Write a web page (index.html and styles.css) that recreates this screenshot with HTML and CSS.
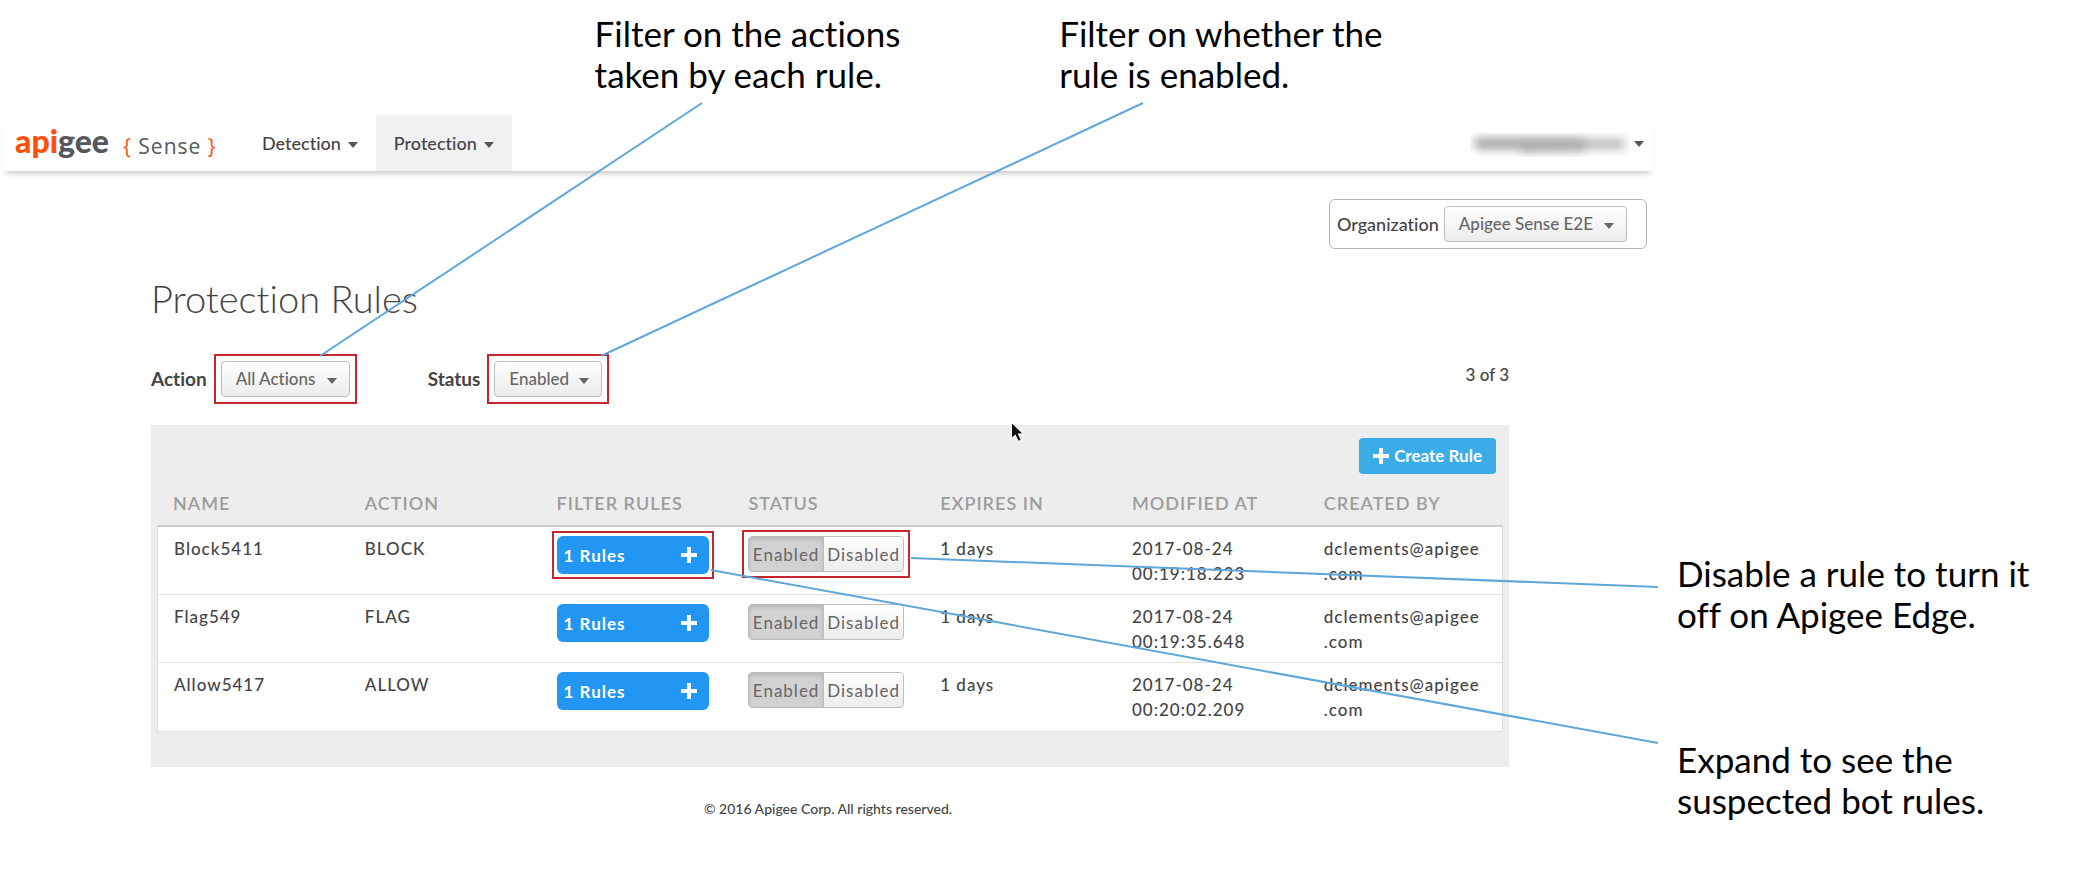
FILE: index.html
```html
<!DOCTYPE html>
<html lang="en">
<head>
<meta charset="utf-8">
<title>Apigee Sense – Protection Rules</title>
<link rel="stylesheet" href="styles.css">
</head>
<body>
<div class="figure">
  <div class="notes-top">
    <p class="note">Filter on the actions<br>taken by each rule.</p>
    <p class="note">Filter on whether the<br>rule is enabled.</p>
  </div>

  <div class="columns">
    <div class="app">
      <header class="topbar">
        <a class="brand" href="#"><span class="brand-name"><span class="orange">api</span>gee</span>
          <span class="product"><span class="orange">{</span> Sense <span class="orange">}</span></span></a>
        <nav class="nav">
          <button class="nav-item caret" type="button">Detection</button>
          <button class="nav-item caret active" type="button">Protection</button>
        </nav>
        <button class="account caret" type="button" aria-label="Account">
          <svg class="masked" width="160" height="24" viewBox="0 0 160 24" aria-hidden="true">
            <defs><filter id="soft" x="-10%" y="-60%" width="120%" height="220%"><feGaussianBlur stdDeviation="5 4"/></filter></defs>
            <g filter="url(#soft)" fill="#777" fill-opacity=".6">
              <rect x="5" y="4" width="46" height="13"/>
              <rect x="51" y="4" width="16" height="16"/>
              <rect x="67" y="4" width="48" height="15"/>
              <rect x="115" y="5" width="40" height="12" fill-opacity=".45"/>
            </g>
          </svg>
        </button>
      </header>

      <div class="org">
        <label for="org">Organization</label>
        <span class="select caret"><select id="org"><option>Apigee Sense E2E</option></select></span>
      </div>

      <main class="main">
        <h1>Protection Rules</h1>
        <div class="filters">
          <label for="action">Action</label>
          <span class="select caret marked"><select id="action"><option>All Actions</option></select></span>
          <label class="status-label" for="status">Status</label>
          <span class="select caret marked"><select id="status"><option>Enabled</option></select></span>
          <span class="count">3 of 3</span>
        </div>

        <section class="panel">
          <button class="create" type="button">
            <svg width="16" height="16" viewBox="0 0 16 16" aria-hidden="true"><path d="M6 0h4v6h6v4h-6v6H6v-6H0V6h6z" fill="#fff"/></svg>
            Create Rule</button>
          <table>
            <thead>
              <tr><th>NAME</th><th>ACTION</th><th>FILTER RULES</th><th>STATUS</th><th>EXPIRES IN</th><th>MODIFIED AT</th><th class="last">CREATED BY</th></tr>
            </thead>
            <tbody>
              <tr>
                <td>Block5411</td><td>BLOCK</td>
                <td><button class="rules marked" type="button">1 Rules <svg width="16" height="16" viewBox="0 0 16 16" aria-hidden="true"><path d="M6 0h4v6h6v4h-6v6H6v-6H0V6h6z" fill="#fff"/></svg></button></td>
                <td><span class="toggle marked"><button type="button" class="on" aria-pressed="true">Enabled</button><button type="button" aria-pressed="false">Disabled</button></span></td>
                <td>1 days</td><td>2017-08-24 00:19:18.223</td><td>dclements@apigee<wbr>.com</td>
              </tr>
              <tr>
                <td>Flag549</td><td>FLAG</td>
                <td><button class="rules" type="button">1 Rules <svg width="16" height="16" viewBox="0 0 16 16" aria-hidden="true"><path d="M6 0h4v6h6v4h-6v6H6v-6H0V6h6z" fill="#fff"/></svg></button></td>
                <td><span class="toggle"><button type="button" class="on" aria-pressed="true">Enabled</button><button type="button" aria-pressed="false">Disabled</button></span></td>
                <td>1 days</td><td>2017-08-24 00:19:35.648</td><td>dclements@apigee<wbr>.com</td>
              </tr>
              <tr>
                <td>Allow5417</td><td>ALLOW</td>
                <td><button class="rules" type="button">1 Rules <svg width="16" height="16" viewBox="0 0 16 16" aria-hidden="true"><path d="M6 0h4v6h6v4h-6v6H6v-6H0V6h6z" fill="#fff"/></svg></button></td>
                <td><span class="toggle"><button type="button" class="on" aria-pressed="true">Enabled</button><button type="button" aria-pressed="false">Disabled</button></span></td>
                <td>1 days</td><td>2017-08-24 00:20:02.209</td><td>dclements@apigee<wbr>.com</td>
              </tr>
            </tbody>
          </table>
        </section>
      </main>
      <footer>© 2016 Apigee Corp. All rights reserved.</footer>
    </div>

    <aside class="notes-side">
      <p class="note">Disable a rule to turn it<br>off on Apigee Edge.</p>
      <p class="note">Expand to see the<br>suspected bot rules.</p>
    </aside>
  </div>

  <svg class="leaders" viewBox="0 0 2079 870" preserveAspectRatio="none" aria-hidden="true">
    <g stroke="#5ea7db" stroke-width="2">
      <path d="M702 103L320 356"/>
      <path d="M1143 103L601 356"/>
      <path d="M911 558L1658 587"/>
      <path d="M711 570L1658 743"/>
    </g>
    <path d="M1011.500 422.500v16l3.800-3.400 2.900 6.200 3-1.400-2.900-6h5z" fill="#111" stroke="#fff" stroke-width="1"/>
  </svg>
</div>
</body>
</html>
```
FILE: styles.css
```css
* { box-sizing: border-box; }

body {
  margin: 0;
  background: #fff;
  color: #444;
  font: 18px/24px "Lato Medium", Lato, "Open Sans", sans-serif;
  font-variant-ligatures: none;
}

button, select { font: inherit; font-variant-ligatures: none; color: inherit; }
p, h1 { margin: 0; }

.figure { position: relative; padding-top: 13px; }

.leaders {
  position: absolute;
  top: 0;
  left: 0;
  width: 100%;
  height: 870px;
  fill: none;
  pointer-events: none;
}

/* Callout texts */
.note {
  color: #000;
  font: 35px/41px "Gill Sans", Lato, sans-serif;
  font-variant-ligatures: none;
  white-space: nowrap;
}
.notes-top {
  display: grid;
  grid-template-columns: 31.3% 1fr;
  margin-bottom: 20px;
  padding-left: 28.6%;
}
.columns { display: grid; grid-template-columns: minmax(0, 1654fr) minmax(0, 425fr); }
.notes-side {
  display: flex;
  flex-direction: column;
  gap: 104px;
  padding: 438px 0 0 23px;
}

/* Top bar */
.app { padding-left: 2px; }
.topbar {
  display: flex;
  align-items: stretch;
  height: 56px;
  padding-left: 13px;
  box-shadow: 0 6px 6px -4px rgba(0, 0, 0, .25);
}
.brand {
  display: flex;
  align-items: center;
  gap: 14px;
  width: 229px;
  color: #54585a;
  text-decoration: none;
}
.brand-name {
  padding-bottom: 4px;
  font-family: Lato, sans-serif;
  font-size: 32px;
  font-weight: 900;
  line-height: 44px;
}
.product {
  padding-top: 6px;
  font: 21px/28px "Open Sans", sans-serif;
  letter-spacing: 1px;
}
.orange { color: #ff4f0f; }

.nav { display: flex; }
.nav-item {
  padding: 0 18px;
  border: 0;
  background: none;
}
.nav-item.active { background: #f0f1f3; }
.account {
  display: flex;
  align-items: center;
  margin-left: auto;
  padding: 4px 10px 0 0;
  border: 0;
  background: none;
}
.caret::after {
  content: "";
  display: inline-block;
  margin-left: 7px;
  border: 5px solid transparent;
  border-top: 6px solid #555;
  border-bottom: 0;
  vertical-align: 2px;
}
.account.caret::after { margin: 0 0 2px 4px; }

/* Drop-downs */
.select { position: relative; display: inline-flex; font-size: 17px; }
.select select {
  height: 36px;
  padding: 0 32px 0 14px;
  appearance: none;
  border: 1px solid #b9bec2;
  border-radius: 4px;
  background: linear-gradient(#fff, #ececec);
  color: #666;
}
.select.caret::after {
  position: absolute;
  right: 13px;
  top: 17px;
  border-top-color: #666;
  pointer-events: none;
}

/* Red frame round the controls that the callouts describe */
.marked { position: relative; }
.marked::before {
  content: "";
  position: absolute;
  inset: -7px;
  border: 2px solid #c5252d;
  pointer-events: none;
}

.org {
  display: flex;
  align-items: center;
  gap: 5px;
  width: 318px;
  height: 50px;
  margin: 28px 7px 25px auto;
  padding: 0 7px;
  border: 1px solid #b5b5b5;
  border-radius: 6px;
}

/* Rules page */
.main { padding: 0 145px 0 149px; }
h1 { font-family: Lato, sans-serif; font-size: 38px; font-weight: 300; line-height: 48px; }
.filters {
  display: flex;
  align-items: center;
  gap: 14px;
  margin: 39px 0 28px;
}
.filters label { font-family: Lato, sans-serif; font-size: 19px; font-weight: 700; }
.filters .status-label { margin-left: 64px; }
.count { align-self: flex-start; margin-left: auto; font-size: 17px; line-height: 28px; }

.panel { padding: 13px 6px 35px; background: #ededed; }
.create {
  display: flex;
  align-items: center;
  gap: 5px;
  height: 36px;
  margin: 0 7px 0 auto;
  padding: 0 14px;
  border: 0;
  border-radius: 4px;
  background: #3aade8;
  color: #fff;
  font-family: Lato, sans-serif;
  font-size: 17px;
  font-weight: 700;
}

table {
  width: 100%;
  border-collapse: separate;
  border-spacing: 0;
  table-layout: fixed;
  font-size: 17px;
  line-height: 25px;
  letter-spacing: 1px;
}
th {
  width: 14.25%;
  padding: 17px 16px 9px;
  border-bottom: 2px solid #cbcecd;
  color: #9d9d9d;
  font-family: "Lato Semibold", "Lato Medium", Lato, sans-serif;
  font-size: 18px;
  font-weight: 600;
  text-align: left;
  white-space: nowrap;
}
th.last { width: auto; }
td {
  padding: 9px 16px 8px;
  border-bottom: 1px solid #e0e0e0;
  background: #fff;
  vertical-align: top;
}
tr:last-child td { padding-bottom: 9px; }
td:first-child { border-left: 1px solid #e0e0e0; }
td:last-child { border-right: 1px solid #e0e0e0; }

.rules {
  display: flex;
  align-items: center;
  justify-content: space-between;
  width: 152px;
  height: 38px;
  padding: 0 12px 0 7px;
  border: 0;
  border-radius: 6px;
  background: #2196f3;
  color: #fff;
  font-family: Lato, sans-serif;
  font-weight: 700;
  letter-spacing: inherit;
}
.rules.marked::before { inset: -5px; }

.toggle {
  display: flex;
  width: 156px;
  height: 36px;
  border: 1px solid #b9bec2;
  border-radius: 4px;
}
.toggle button {
  flex: auto;
  padding: 0;
  border: 0;
  border-radius: 0 3px 3px 0;
  background: linear-gradient(#fff, #ececec);
  color: #666;
  font-family: Lato, sans-serif;
  letter-spacing: inherit;
}
.toggle .on {
  border-right: 1px solid #b9bec2;
  border-radius: 3px 0 0 3px;
  background: #d2d2d2;
  box-shadow: inset 0 2px 4px rgba(0, 0, 0, .15);
}

footer { margin-top: 30px; font-size: 14px; text-align: center; }
```
